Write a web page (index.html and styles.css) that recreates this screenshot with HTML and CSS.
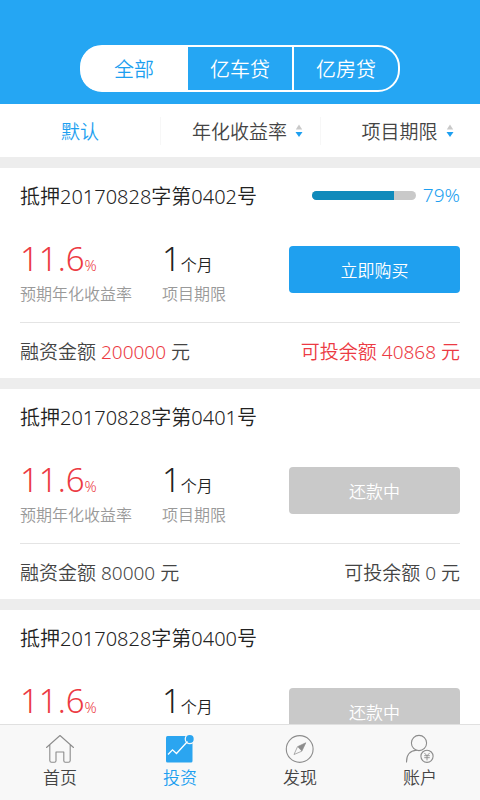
FILE: index.html
```html
<!DOCTYPE html>
<html lang="zh-CN">
<head>
<meta charset="utf-8">
<meta name="viewport" content="width=device-width, initial-scale=1">
<title>投资</title>
<link rel="stylesheet" href="styles.css">
</head>
<body>
<header class="header">
  <div class="segments">
    <button type="button" class="segment segment-active">全部</button>
    <button type="button" class="segment">亿车贷</button>
    <button type="button" class="segment">亿房贷</button>
  </div>
</header>
<div class="filters">
  <button type="button" class="filter filter-active">默认</button>
  <button type="button" class="filter filter-sort">年化收益率
    <svg class="sort" viewBox="0 0 8 14" aria-hidden="true"><path fill="#c9c9c9" d="M4 0.5 7.2 5.5H.8z"/><path fill="#1d9ff0" d="M.5 8H7.500L4 13z"/></svg>
  </button>
  <button type="button" class="filter filter-sort">项目期限
    <svg class="sort" viewBox="0 0 8 14" aria-hidden="true"><path fill="#c9c9c9" d="M4 0.5 7.2 5.5H.8z"/><path fill="#1d9ff0" d="M.5 8H7.500L4 13z"/></svg>
  </button>
</div>
<main class="list">
  <article class="card">
    <div class="card-head">
      <h2 class="title">抵押20170828字第0402号</h2>
      <label class="progress"><progress class="bar" max="100" value="79"></progress>79%</label>
    </div>
    <div class="card-body">
      <div class="stat stat-rate"><p class="value">11.6<span class="unit unit-percent">%</span></p><p class="caption">预期年化收益率</p></div>
      <div class="stat"><p class="value">1<span class="unit">个月</span></p><p class="caption">项目期限</p></div>
      <button type="button" class="buy">立即购买</button>
    </div>
    <div class="card-foot">
      <p>融资金额 <span class="red">200000</span> 元</p>
      <p class="red">可投余额 40868 元</p>
    </div>
  </article>
  <article class="card">
    <div class="card-head">
      <h2 class="title">抵押20170828字第0401号</h2>
    </div>
    <div class="card-body">
      <div class="stat stat-rate"><p class="value">11.6<span class="unit unit-percent">%</span></p><p class="caption">预期年化收益率</p></div>
      <div class="stat"><p class="value">1<span class="unit">个月</span></p><p class="caption">项目期限</p></div>
      <button type="button" class="buy" disabled>还款中</button>
    </div>
    <div class="card-foot">
      <p>融资金额 80000 元</p>
      <p>可投余额 0 元</p>
    </div>
  </article>
  <article class="card">
    <div class="card-head">
      <h2 class="title">抵押20170828字第0400号</h2>
    </div>
    <div class="card-body">
      <div class="stat stat-rate"><p class="value">11.6<span class="unit unit-percent">%</span></p></div>
      <div class="stat"><p class="value">1<span class="unit">个月</span></p></div>
      <button type="button" class="buy" disabled>还款中</button>
    </div>
  </article>
</main>
<nav class="tabbar">
  <a class="tab" href="#home">
    <svg class="icon" viewBox="0 0 30 30" fill="none" stroke="#8c8c8c" stroke-width="1.100" stroke-linejoin="round" stroke-linecap="round" aria-hidden="true"><path d="M1.500 13.500 15 1.500 28.500 13.500M4.800 11V26.500Q4.800 28.300 6.600 28.300H9.500Q11 28.300 11 26.800V18H18.800V26.800Q18.800 28.300 20.300 28.300H23.400Q25.200 28.300 25.200 26.500V11"/></svg>
    首页
  </a>
  <a class="tab tab-active" href="#invest">
    <svg class="icon" viewBox="0 0 30 30" fill="none" aria-hidden="true"><rect x="1" y="2" width="26.500" height="26.500" rx="1.500" fill="#2ba5f0"/><circle cx="24.800" cy="5" r="5.200" fill="#f8f8f8"/><circle cx="24.800" cy="5" r="3.900" fill="#2ba5f0"/><path d="M3 20.500 7.500 15.800 11.500 19.500 22.500 7.500" stroke="#fff" stroke-width="1.300"/></svg>
    投资
  </a>
  <a class="tab" href="#discover">
    <svg class="icon" viewBox="0 0 30 30" fill="none" stroke="#8c8c8c" stroke-width="1.100" aria-hidden="true"><circle cx="14.700" cy="15" r="13.400"/><path d="M20.800 8.800 16.800 17.200 9 20.500 12.500 12.700z" stroke-width=".7"/><path d="M20.800 8.800 16.800 17.200 12.500 12.700z" fill="#8c8c8c" stroke="none"/></svg>
    发现
  </a>
  <a class="tab" href="#account">
    <svg class="icon" viewBox="0 0 30 30" fill="none" stroke="#8c8c8c" stroke-width="1.100" stroke-linecap="round" aria-hidden="true"><circle cx="14" cy="9" r="7.600"/><path d="M1.500 28Q1.500 17 11.500 16.300"/><circle cx="22" cy="22.300" r="6.100"/><path stroke-width=".9" d="M19.600 19.200 22 21.700 24.400 19.200M22 21.700V26M19.600 21.700H24.400M19.600 23.700H24.400"/></svg>
    账户
  </a>
</nav>
</body>
</html>
```
FILE: styles.css
```css
* {
  box-sizing: border-box;
}

body {
  margin: 0;
  height: 100vh;
  display: flex;
  flex-direction: column;
  background: #ededed;
  color: #222;
  font-family: "Noto Sans", "Noto Sans CJK SC", sans-serif;
  font-weight: 350;
}

h2,
p {
  margin: 0;
  font-weight: inherit;
}

button {
  border: 0;
  padding: 0;
  background: none;
  color: inherit;
  font: inherit;
}

.header {
  padding: 45px 80px 12px;
  background: #25a6f3;
}

.segments {
  display: flex;
  height: 47px;
  border: 2px solid #fff;
  border-radius: 22px;
}

.segment {
  flex: 1;
  color: #fff;
  font-size: 20px;
}

.segment + .segment {
  border-left: 2px solid #fff;
}

.segment-active {
  border-radius: 18px 0 0 18px;
  background: #fff;
  box-shadow: 0 0 0 1px #fff;
  color: #1d9ff0;
}

.filters {
  display: grid;
  grid-template-columns: repeat(3, 1fr);
  flex: none;
  height: 53px;
  padding: 13px 0;
  background: #fff;
}

.filter {
  display: flex;
  align-items: center;
  justify-content: center;
  gap: 8px;
  color: #444;
  font-size: 19px;
}

.filter-sort {
  padding-left: 14px;
  border-left: 1px solid #f7f7f7;
}

.filter-active {
  color: #1d9ff0;
}

.sort {
  width: 8px;
  height: 14px;
}

.list {
  flex: 1;
  min-height: 0;
  overflow-y: auto;
  scrollbar-width: none;
  padding-top: 11px;
  display: flex;
  flex-direction: column;
  gap: 11px;
}

.card {
  flex: none;
  padding: 0 20px;
  background: #fff;
}

.card-head {
  display: flex;
  align-items: center;
  justify-content: space-between;
  height: 54px;
}

.title {
  font-size: 20px;
}

.progress {
  display: flex;
  align-items: center;
  gap: 7px;
  color: #1d9ff0;
  font-size: 19px;
}

.bar {
  appearance: none;
  width: 104px;
  height: 9px;
  border: 0;
  border-radius: 5px;
  overflow: hidden;
}

.bar::-webkit-progress-bar {
  background: #c9c9c9;
}

.bar::-webkit-progress-value {
  background: #108abb;
}

.card-body {
  display: flex;
  align-items: flex-start;
  height: 100px;
  padding-top: 14px;
}

.stat {
  flex: none;
}

.stat-rate {
  width: 142px;
}

.value {
  font-size: 33px;
  line-height: 46px;
}

.stat-rate .value,
.red {
  color: #ec3a43;
}

.unit {
  font-size: 16px;
  line-height: 1;
}

.unit-percent {
  font-size: 15px;
}

.caption {
  color: #999;
  font-size: 16px;
  line-height: 24px;
}

.buy {
  width: 171px;
  height: 47px;
  margin: 10px 0 0 auto;
  border-radius: 4px;
  background: #1fa0ef;
  color: #fff;
  font-size: 17px;
}

.buy:disabled {
  background: #c9c9c9;
}

.card-foot {
  display: flex;
  align-items: center;
  justify-content: space-between;
  height: 56px;
  border-top: 1px solid #e4e4e4;
  color: #444;
  font-size: 19px;
}

.tabbar {
  display: flex;
  flex: none;
  height: 76px;
  border-top: 1px solid #e0e0e0;
  background: #f8f8f8;
}

.tab {
  flex: 1;
  display: flex;
  flex-direction: column;
  align-items: center;
  padding-top: 9px;
  color: #444;
  font-size: 17px;
  line-height: 28px;
  text-decoration: none;
}

.tab-active {
  color: #1d9ff0;
}

.icon {
  width: 30px;
  height: 30px;
}
```
